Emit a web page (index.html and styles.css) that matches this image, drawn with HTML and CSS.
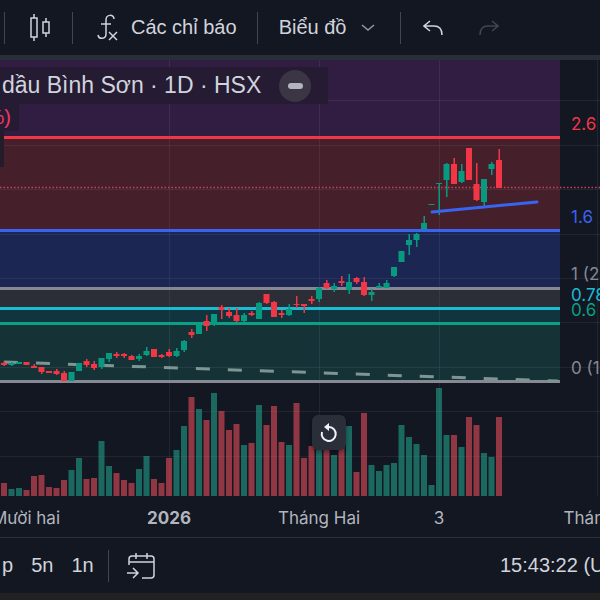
FILE: index.html
```html
<!DOCTYPE html>
<html lang="vi">
<head>
  <meta charset="UTF-8">
  <meta name="viewport" content="width=device-width, initial-scale=1.0">
  <title>Bình Sơn · 1D · HSX</title>
  <link rel="stylesheet" href="styles.css">
</head>
<body>
  <header class="toolbar">
    <span class="divider"></span>
    <button class="tool candle-btn" aria-label="Nến">
      <svg width="22" height="30" viewBox="0 0 22 30" fill="none" stroke="currentColor" stroke-width="1.5">
        <path d="M2 5h6v19H2zM5 1v4M5 24v4M14 9h6v11h-6zM17 5v4M17 20v4"/>
      </svg>
    </button>
    <span class="divider"></span>
    <button class="tool indicators-btn">
      <svg width="22" height="28" viewBox="0 0 22 28" fill="none" stroke="currentColor" stroke-width="1.5">
        <path d="M17 5C17 0 9 0 9 6v14c0 5-7 6-8 1M4 10h10M12 18l8 8M20 18l-8 8"/>
      </svg>
      <span>Các chỉ báo</span>
    </button>
    <span class="divider"></span>
    <button class="tool layout-btn">
      <span>Biểu đồ</span>
      <svg class="chevron" width="14" height="8" viewBox="0 0 14 8" fill="none" stroke="currentColor" stroke-width="1.5">
        <path d="M1 1l6 5 6-5"/>
      </svg>
    </button>
    <span class="divider"></span>
    <div class="history">
      <button class="tool" aria-label="Hoàn tác">
        <svg width="20" height="16" viewBox="0 0 20 16" fill="none" stroke="currentColor" stroke-width="1.5">
          <path d="M7 1L1 6l6 5M1 6h10c5 0 8 3 8 9"/>
        </svg>
      </button>
      <button class="tool" aria-label="Làm lại" disabled>
        <svg width="20" height="16" viewBox="0 0 20 16" fill="none" stroke="currentColor" stroke-width="1.5">
          <path d="M13 1l6 5-6 5M19 6H9c-5 0-8 3-8 9"/>
        </svg>
      </button>
    </div>
  </header>

  <main class="chart">
    <svg id="plot" class="plot" viewBox="0 60 600 477"></svg>
    <div class="legend">
      <div class="legend-title">
        <span>dầu Bình Sơn · 1D · HSX</span>
        <button class="collapse" aria-label="Thu gọn"></button>
      </div>
      <div class="legend-change">%)</div>
      <div class="legend-stub"></div>
    </div>
    <button class="reset" aria-label="Đặt lại biểu đồ">
      <svg width="20" height="20" viewBox="0 0 20 20" fill="none" stroke="currentColor" stroke-width="2">
        <path d="M3 9a7 7 0 1 0 7-5H7"/>
        <path d="M10 0v8L5 4z" fill="currentColor" stroke="none"/>
      </svg>
    </button>
  </main>

  <footer class="bottom-bar">
    <div class="ranges">
      <button class="tool">p</button>
      <button class="tool">5n</button>
      <button class="tool">1n</button>
    </div>
    <span class="divider"></span>
    <button class="tool goto-btn" aria-label="Đi đến ngày">
      <svg width="30" height="28" viewBox="0 0 30 28" fill="none" stroke="currentColor" stroke-width="1.5">
        <path d="M3 13V7q0-3 3-3h19q3 0 3 3v16q0 3-3 3H16M3 10h25M10 1v6M21 1v6M1 21h11M7 16l5 5-5 5"/>
      </svg>
    </button>
    <button class="tool clock">15:43:22 (UTC+7)</button>
  </footer>

  <script src="chart.js"></script>
</body>
</html>
```

FILE: styles.css
```css
body {
  margin: 0;
  min-height: 100vh;
  background: #212122;
  color: #d1d4dc;
  font-family: "Liberation Sans", Arial, sans-serif;
  font-size: 20px;
  overflow-x: hidden;
}

button {
  border: none;
  padding: 0;
  background: none;
  color: inherit;
  font: inherit;
  cursor: pointer;
}

.tool {
  display: flex;
  align-items: center;
  white-space: nowrap;
}

.tool:disabled {
  color: #434651;
}

.divider {
  flex: none;
  width: 1px;
  height: 32px;
  background: #434651;
}

.toolbar {
  display: flex;
  align-items: center;
  height: 55px;
  padding-left: 4px;
  background: #131722;
  border-bottom: 5px solid #2a2e39;
}

.candle-btn {
  padding: 0 21px 0 24px;
}

.indicators-btn {
  gap: 12px;
  padding: 0 20px 0 24px;
}

.layout-btn {
  gap: 15px;
  padding: 0 25px 0 21px;
}

.chevron {
  color: #9598a1;
}

.history {
  display: flex;
  gap: 36px;
  padding-left: 22px;
}

.chart {
  position: relative;
  background: #131722;
  border-bottom: 1px solid #2a2e39;
}

.plot {
  display: block;
  width: 100%;
  font-family: Inter, Roboto, sans-serif;
  font-size: 17px;
}

.grid {
  stroke: #b8bed8;
  stroke-opacity: 0.09;
}

.up {
  fill: #089981;
}

.down {
  fill: #f23645;
}

.volume {
  opacity: 0.55;
}

.volume.up {
  fill: #22ab94;
}

.volume.down {
  fill: #f7525f;
}

.time {
  fill: #b2b5be;
  text-anchor: middle;
}

.year {
  font-weight: 700;
}

.legend {
  position: absolute;
  top: 7px;
  left: 0;
}

.legend-title {
  display: flex;
  align-items: center;
  gap: 18px;
  height: 37px;
  padding: 0 17px 0 2px;
  background: #251c33;
  font-size: 23px;
}

.collapse {
  display: grid;
  place-items: center;
  width: 32px;
  height: 32px;
  border-radius: 50%;
  background: #3b3546;
}

.collapse::before {
  content: "";
  width: 15px;
  height: 6px;
  border-radius: 3px;
  background: #b2b5be;
}

.legend-change {
  display: flex;
  align-items: center;
  justify-content: flex-end;
  width: 19px;
  height: 27px;
  padding-right: 8px;
  box-sizing: border-box;
  background: #251c33;
  color: #f23665;
  font-size: 20px;
}

.legend-stub {
  width: 4px;
  height: 36px;
  background: #251c29;
}

.reset {
  position: absolute;
  left: 52%;
  bottom: 87px;
  display: grid;
  place-items: center;
  width: 34px;
  height: 35px;
  border-radius: 6px;
  background: #2a2e39;
  color: #f0f3fa;
  box-shadow: 0 2px 4px rgba(0, 0, 0, 0.4);
}

.bottom-bar {
  display: flex;
  align-items: center;
  height: 55px;
  background: #131722;
  overflow: hidden;
}

.ranges {
  display: flex;
  gap: 18px;
  padding: 0 14px 0 2px;
}

.goto-btn {
  padding-left: 17px;
}

.clock {
  width: 100px;
  margin-left: auto;
}
```

FILE: chart.js
```js
const plot = document.getElementById("plot");

const BASE = 496;
const STEP = 7.5;
const BODY = 6;
const RIGHT = 560;

// direction, high, body top, body bottom, low, volume
const bars = [
  ["d", 361, 363, 365, 366, 13], ["u", 362, 363, 365, 366, 7], ["u", 362, 362, 364, 364, 8],
  ["d", 362, 362, 365, 365, 6], ["d", 364, 366, 368, 368, 20], ["d", 367, 367, 372, 374, 21],
  ["d", 371, 371, 373, 373, 9], ["d", 369, 371, 374, 375, 8], ["d", 371, 373, 381, 381, 16],
  ["u", 372, 372, 381, 381, 26], ["u", 363, 363, 371, 371, 38], ["d", 359, 361, 365, 367, 17],
  ["d", 361, 364, 368, 370, 18], ["u", 358, 358, 367, 369, 55], ["u", 353, 353, 359, 362, 30],
  ["d", 352, 354, 356, 358, 23], ["d", 353, 354, 356, 358, 16], ["d", 355, 356, 360, 360, 13],
  ["u", 354, 356, 359, 361, 27], ["u", 347, 351, 355, 356, 40], ["d", 349, 349, 357, 357, 17],
  ["d", 354, 355, 357, 358, 13], ["d", 349, 352, 356, 357, 38], ["u", 348, 351, 356, 357, 46],
  ["u", 340, 341, 350, 352, 70], ["d", 329, 332, 335, 338, 99], ["u", 325, 325, 334, 334, 87],
  ["d", 315, 321, 326, 331, 76], ["u", 314, 314, 325, 326, 103], ["d", 305, 307, 310, 319, 85],
  ["d", 308, 312, 316, 318, 66], ["d", 308, 315, 321, 322, 72], ["u", 313, 315, 321, 322, 51],
  ["d", 311, 313, 315, 316, 53], ["u", 302, 303, 319, 319, 91], ["d", 294, 294, 303, 304, 71],
  ["d", 301, 302, 317, 317, 90], ["d", 310, 313, 315, 318, 54], ["u", 304, 309, 315, 316, 51],
  ["d", 296, 304, 305, 308, 93], ["d", 304, 304, 306, 313, 38], ["d", 296, 299, 301, 304, 50],
  ["u", 287, 288, 299, 302, 52], ["d", 280, 283, 288, 289, 56], ["u", 283, 286, 289, 292, 41],
  ["d", 276, 281, 283, 286, 50], ["u", 274, 282, 290, 294, 70], ["d", 277, 278, 282, 284, 24],
  ["d", 277, 282, 295, 296, 83], ["u", 289, 292, 295, 301, 31], ["u", 283, 286, 288, 288, 25],
  ["u", 280, 283, 288, 288, 31], ["u", 267, 267, 276, 277, 33], ["u", 251, 251, 262, 262, 71],
  ["u", 234, 240, 245, 255, 59], ["u", 233, 234, 240, 247, 52], ["u", 216, 223, 229, 230, 41],
  ["u", 204, 204, 205, 205, 11], ["u", 183, 183, 184, 215, 108], ["u", 163, 164, 180, 197, 61],
  ["d", 158, 164, 184, 184, 61], ["u", 164, 171, 182, 183, 49], ["d", 148, 148, 180, 180, 79],
  ["d", 163, 184, 200, 201, 71], ["u", 179, 179, 202, 208, 43], ["u", 162, 164, 169, 175, 39],
  ["d", 149, 160, 188, 188, 79]
];

// fibonacci zones: top, bottom, fill
const zones = [
  [60, 138, "#321d42"],
  [138, 231, "#45202b"],
  [231, 289, "#1b2752"],
  [289, 309, "#2b2d37"],
  [309, 324, "#10353f"],
  [324, 382, "#153337"]
];

// y, line colour, label, label baseline
const levels = [
  [138, "#f23645", "2.6", 130],
  [231, "#3864f0", "1.6", 223],
  [289, "#868993", "1 (2", 280],
  [309, "#1cbbd4", "0.78", 301],
  [324, "#0b9f83", "0.6", 316],
  [382, "#868993", "0 (1", 374]
];

const months = [
  [26, "Mười hai"],
  [169, "2026", "year"],
  [319, "Tháng Hai"],
  [439, "3"],
  [597, "Tháng 4"]
];

const rect = (x, y, w, h, attrs) =>
  `<rect x="${x}" y="${y}" width="${w}" height="${h}" ${attrs}/>`;
const line = (x1, y1, x2, y2, attrs) =>
  `<line x1="${x1}" y1="${y1}" x2="${x2}" y2="${y2}" ${attrs}/>`;

let out = "";

zones.forEach(([top, bottom, fill]) => {
  out += rect(0, top, RIGHT, bottom - top, `fill="${fill}"`);
});

[100, 145, 189, 234, 278, 322, 367, 411, 456].forEach(y => {
  out += line(0, y + 0.5, 600, y + 0.5, 'class="grid"');
});
[169, 319, 439, 597].forEach(x => {
  out += line(x + 0.5, 60, x + 0.5, BASE, 'class="grid"');
});

bars.forEach(([dir, , , , , volume], i) => {
  const cls = dir === "u" ? "up" : "down";
  out += rect(1 + i * STEP, BASE - volume, BODY, volume, `class="volume ${cls}"`);
});

levels.forEach(([y, color, label, baseline]) => {
  out += line(0, y - 0.5, RIGHT, y - 0.5, `stroke="${color}" stroke-width="3"`);
  out += `<text x="571" y="${baseline}" fill="${color}">${label}</text>`;
});

out += line(4, 362, 558, 381, 'stroke="#7d9693" stroke-width="3" stroke-dasharray="14 18"');
out += line(0, 187.5, 600, 187.5, 'stroke="#d0405a" stroke-width="1.5" stroke-dasharray="1.5 2"');

bars.forEach(([dir, high, top, bottom, low], i) => {
  const cls = dir === "u" ? "up" : "down";
  const x = 4 + i * STEP;
  out += rect(x - 0.5, high, 1.5, low - high, `class="${cls}"`);
  out += rect(x - 3, top, BODY, bottom - top, `class="${cls}"`);
});

out += line(432, 212, 537, 202, 'stroke="#3864f0" stroke-width="3" stroke-linecap="round"');

months.forEach(([x, text, cls = ""]) => {
  out += `<text class="time ${cls}" x="${x}" y="524">${text}</text>`;
});

plot.innerHTML = out;
```
